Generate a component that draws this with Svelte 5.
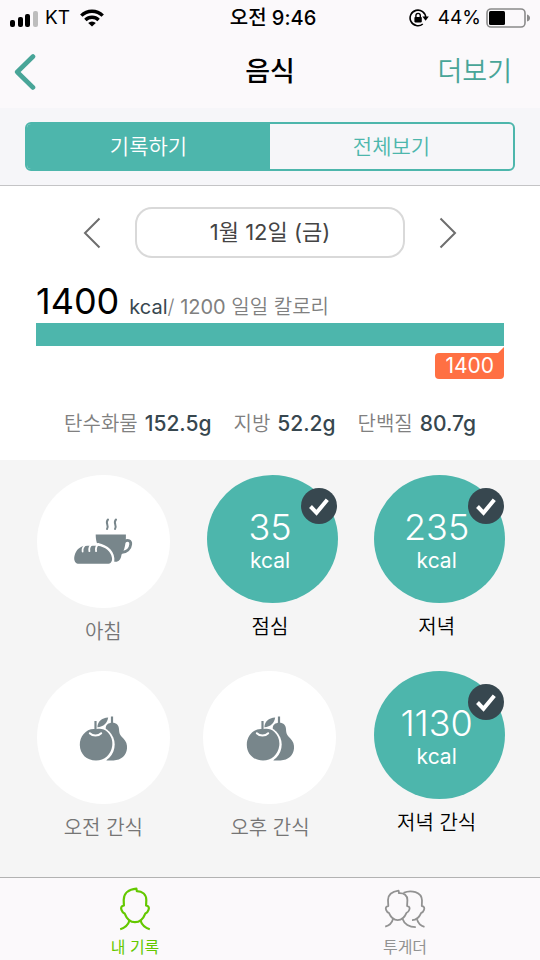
<script lang="ts">
    type Meal = { name: string; kcal?: number; icon?: 'breakfast' | 'fruit' };

    const meals: Meal[] = [
        { name: '아침', icon: 'breakfast' },
        { name: '점심', kcal: 35 },
        { name: '저녁', kcal: 235 },
        { name: '오전 간식', icon: 'fruit' },
        { name: '오후 간식', icon: 'fruit' },
        { name: '저녁 간식', kcal: 1130 },
    ];

    const nutrients = [
        { name: '탄수화물', amount: '152.5g' },
        { name: '지방', amount: '52.2g' },
        { name: '단백질', amount: '80.7g' },
    ];

    const goal = 1200;
    const eaten = 1400;
    const percent = Math.min(100, (eaten / goal) * 100);

    let view = $state('record');
</script>

<div class="app">
    <div class="status">
        <div class="status_side">
            <svg width="28" height="18" viewBox="0 0 28 18">
                <rect x="0" y="11" width="5" height="7" rx="2" />
                <rect x="8" y="8" width="5" height="10" rx="2" />
                <rect x="15" y="5" width="5" height="13" rx="2" />
                <rect x="23" y="2" width="5" height="16" rx="2" fill="#bdbdbd" />
            </svg>
            <span class="carrier">KT</span>
            <svg class="wifi" width="24" height="18" viewBox="0 0 24 18">
                <g fill="none" stroke="#000" stroke-width="3.4">
                    <path d="M1.3 6.6a15.2 15.2 0 0 1 21.4 0" />
                    <path d="M5.4 11a9.4 9.4 0 0 1 13.2 0" />
                </g>
                <path d="M12 17.6l-3.8-3.5a5.4 5.4 0 0 1 7.6 0z" />
            </svg>
        </div>
        <span class="time">오전 9:46</span>
        <div class="status_side end">
            <svg class="lock" width="20" height="18" viewBox="0 0 20 18">
                <path
                    d="M13.8 15a7.8 7.8 0 1 1 2.9-6.4"
                    fill="none"
                    stroke="#000"
                    stroke-width="1.6"
                />
                <path d="M13.4 7.6h6.4l-3.2 4.2z" />
                <rect x="5.4" y="8" width="7.4" height="5.4" rx="0.8" />
                <path d="M6.9 8.4V6.6a2.2 2.2 0 0 1 4.4 0v1.8" fill="none" stroke="#000" stroke-width="1.4" />
            </svg>
            <span>44%</span>
            <svg class="battery" width="44" height="20" viewBox="0 0 44 20">
                <rect x="1" y="1" width="38" height="18" rx="4" fill="none" stroke="#8b8b8b" stroke-width="1.6" />
                <rect x="3" y="3" width="16" height="14" rx="1.5" />
                <path d="M41 6.500q3 1 3 3.500t-3 3.500z" fill="#8b8b8b" />
            </svg>
        </div>
    </div>

    <header>
        <button class="back" aria-label="뒤로">
            <svg width="22" height="38" viewBox="0 0 22 38">
                <path
                    d="M19 3.500L3.200 19 19 34.500"
                    fill="none"
                    stroke="#48a598"
                    stroke-width="4.600"
                    stroke-linecap="round"
                    stroke-linejoin="round"
                />
            </svg>
        </button>
        <h1>음식</h1>
        <button class="more">더보기</button>
    </header>

    <div class="switch">
        <div class="segments">
            <button class:active={view === 'record'} onclick={() => (view = 'record')}>기록하기</button>
            <button class:active={view === 'all'} onclick={() => (view = 'all')}>전체보기</button>
        </div>
    </div>

    <section class="summary">
        <div class="dates">
            <button class="arrow" aria-label="이전 날짜">
                <svg width="18" height="32" viewBox="0 0 18 32">
                    <path d="M16.500 1.500L2 16l14.500 14.500" fill="none" stroke="#6e6e6e" stroke-width="2" />
                </svg>
            </button>
            <button class="date">1월 12일 (금)</button>
            <button class="arrow" aria-label="다음 날짜">
                <svg width="18" height="32" viewBox="0 0 18 32">
                    <path d="M1.500 1.500L16 16 1.500 30.500" fill="none" stroke="#6e6e6e" stroke-width="2" />
                </svg>
            </button>
        </div>

        <p class="total">
            <strong>{eaten}</strong>
            <span class="goal"><span class="unit">kcal</span>/ <span class="limit">{goal}</span> 일일 칼로리</span>
        </p>
        <div class="track">
            <div class="fill" style="width: {percent}%"></div>
        </div>
        <div class="marker">
            <svg width="7" height="7" viewBox="0 0 7 7"><path d="M7 1v6H1z" fill="#ff7043" /></svg>
            <span>{eaten}</span>
        </div>

        <dl>
            {#each nutrients as item}
                <div>
                    <dt>{item.name}</dt>
                    <dd>{item.amount}</dd>
                </div>
            {/each}
        </dl>
    </section>

    <main>
        {#each meals as meal}
            <button class="meal" class:done={meal.kcal}>
                <span class="disk">
                    {#if meal.kcal}
                        <span class="kcal">{meal.kcal}</span>
                        <span class="kcal_unit">kcal</span>
                        <svg class="check" width="36" height="36" viewBox="0 0 36 36">
                            <circle cx="18" cy="18" r="18" fill="#37474f" />
                            <path d="M9.500 18.500l6 6.300L26.300 11.800" fill="none" stroke="#fff" stroke-width="4" />
                        </svg>
                    {:else if meal.icon === 'breakfast'}
                        <svg width="60" height="50" viewBox="0 0 60 50" fill="#78868b">
                            <g fill="none" stroke="#78868b" stroke-linecap="round">
                                <path d="M35 2.500c-3.500 4 1.600 5.200-1 9.500M43 2.500c-3.500 4 1.600 5.200-1 9.500" stroke-width="2" />
                                <path d="M51.500 24.600c3.600-2.400 6.600-.8 6.200 2.800-.4 4.400-4 7.600-8.700 8" stroke-width="2.800" />
                            </g>
                            <path
                                d="M22.700 17.600h30.200c.2 9-1.200 15.200-4.400 20.200-.5 3.600-1.600 6.200-4.700 6.900h-2.500c1.300-9.500-6-17.300-17.400-18.700-.8-2.400-1.200-5.200-1.200-8.400z"
                            />
                            <path
                                d="M5 46.800C1.700 46 .5 42.500 1.600 38.500 3 33 7 29.400 12 28.800h12.500C32.500 29.800 38 34.500 39 41c.4 3.500-1.200 5.800-4.500 5.800z"
                            />
                            <path
                                d="M13.400 27.500c-3 1.400-4.200 4-3.800 7M19.400 27c-2.600 1.700-3.600 4.300-3 7.200M25.600 27c-2.300 1.900-3.100 4.300-2.500 7.200"
                                fill="none"
                                stroke="#fff"
                                stroke-width="1.800"
                                stroke-linecap="round"
                            />
                        </svg>
                    {:else}
                        <svg width="50" height="48" viewBox="0 0 50 48" fill="#78868b">
                            <path
                                d="M28.500 46.500L27.700 14c.2-3.200 2.400-5.300 6.600-5.300 4.400 0 6.500 2.500 6.700 6.300.2 4.800 1 6 4.400 9.600 2.700 2.900 4 6 3.600 10-.7 7-5.600 11.600-13.500 11.900z"
                            />
                            <path d="M34 2.500V10" stroke="#78868b" stroke-width="2.200" />
                            <circle cx="18.200" cy="30.600" r="18.500" fill="#fff" />
                            <path
                                d="M18 15.200c4-1 8.300-.5 11.400 2.800 3.800 3.700 5.600 8.600 4.800 14-1.100 8.500-7.600 14.500-16.200 14.500C8.500 46.500 2 40 1.800 31 1.600 22 8.800 13.600 18 15.200z"
                            />
                            <path d="M11.800 19.300c3 3 8.400 3 11.400 0" fill="none" stroke="#fff" stroke-width="2" stroke-linecap="round" />
                            <path d="M17.500 7v9.500" stroke="#78868b" stroke-width="2.200" />
                            <path d="M19.400 13.200c.2-5.500 4-9.200 10.800-9.700-.9 5.600-4.600 9.400-10.800 9.700z" />
                        </svg>
                    {/if}
                </span>
                <span class="label">{meal.name}</span>
            </button>
        {/each}
    </main>

    <nav>
        <a href="#me" class="active">
            <svg width="34" height="44" viewBox="0 0 34 44" fill="none" stroke="currentColor" stroke-width="2.200" stroke-linejoin="round">
                <path
                    d="M18.800 4.200L18.400 1.700C10.500 2.300 5.800 6.500 5.700 13l.2 5.500c-2.900.6-3.200 2.300-2.400 4.400.6 1.800 1.600 3.200 3.200 3.700 2.100 5.400 5.700 8.600 10.300 8.600s8.200-3.200 10.300-8.600c1.600-.5 2.600-1.900 3.200-3.700.8-2.100.5-3.800-2.400-4.400l.2-5.500C28.200 7.500 24.500 4.200 18.800 4.200z"
                />
                <path d="M11.500 33.500c-1.200 4-4.300 7.200-9.300 8.700M22.500 33.500c1.200 4 4.300 7.200 9.300 8.700" />
            </svg>
            내 기록
        </a>
        <a href="#together">
            <svg width="44" height="44" viewBox="0 -2 44 44" fill="none" stroke="currentColor" stroke-width="1.800" stroke-linejoin="round">
                <path
                    d="M16 4.200L15.600 1.700C9 2.500 5.200 6 5 11l.3 6c-2.500.5-2.900 2-2.200 3.800.6 1.600 1.400 2.700 2.800 3.100 1.900 4.500 4.900 7.200 8.800 7.200s6.900-2.700 8.800-7.200c1.400-.4 2.200-1.500 2.800-3.100.7-1.800.3-3.300-2.200-3.800l.3-6c0-4.500-3.200-7.200-8.600-6.800z"
                />
                <path d="M10 30c-.9 3.600-3.400 6.400-7.800 7.600M19.600 30c1.500 4.800 6.700 8.300 13.200 8.200" />
                <path
                    d="M20.500 3.800c7.500-3.200 18.300-1 18.500 7.700l-.2 5.500c2.500.5 2.900 2 2.200 3.800-.6 1.600-1.400 2.700-2.800 3.100-2 4.700-5 7.300-9.200 7.200"
                />
                <path d="M34 30.200c.9 3.600 3.400 6.400 7.500 7.600" />
            </svg>
            투게더
        </a>
    </nav>
</div>

<style>
    :global(body) {
        margin: 0;
        background: #fff;
    }

    .app {
        display: flex;
        flex-direction: column;
        min-height: 100vh;
        font-family: Inter, 'Noto Sans CJK KR', sans-serif;
        color: #000;
    }

    button {
        margin: 0;
        padding: 0;
        border: 0;
        background: none;
        color: inherit;
        font: inherit;
        cursor: pointer;
    }

    svg {
        display: block;
        flex: none;
    }

    .status {
        display: grid;
        grid-template-columns: 1fr auto 1fr;
        align-items: center;
        height: 36px;
        padding: 0 10px;
        background: #fbf9fb;
        font-size: 19px;
        line-height: 36px;
    }

    .status_side {
        display: flex;
        align-items: center;
    }

    .end {
        justify-content: flex-end;
    }

    .carrier {
        margin: 0 10px 0 7px;
    }

    .time {
        padding-left: 6px;
        font-size: 20px;
        font-weight: 500;
    }

    .lock {
        margin-right: 9px;
    }

    .battery {
        margin-left: 5px;
    }

    header {
        display: grid;
        grid-template-columns: 1fr auto 1fr;
        align-items: center;
        height: 72px;
        padding: 0 28px 0 14px;
        background: #fbf9fb;
    }

    .back {
        justify-self: start;
    }

    h1 {
        margin: 0 0 0 14px;
        font-size: 27px;
        line-height: 40px;
        font-weight: 500;
    }

    .more {
        justify-self: end;
        color: #48a598;
        font-size: 27px;
        line-height: 40px;
        font-weight: 350;
    }

    .switch {
        padding: 14px 25px;
        border-bottom: 1px solid #c4c4c6;
        background: #f6f6f9;
    }

    .segments {
        display: flex;
        overflow: hidden;
        border: 2px solid #4db6ac;
        border-radius: 6px;
    }

    .segments button {
        flex: 1;
        height: 45px;
        color: #4db6ac;
        font-size: 21px;
        line-height: 45px;
        font-weight: 350;
    }

    .segments .active {
        background: #4db6ac;
        color: #fff;
    }

    .summary {
        padding: 21px 36px 20px;
        background: #fff;
    }

    .dates {
        display: flex;
        justify-content: center;
        align-items: center;
        gap: 34px;
    }

    .date {
        flex: 0 1 270px;
        box-sizing: border-box;
        height: 51px;
        border: 2px solid #d9d9d9;
        border-radius: 17px;
        color: #444;
        font-size: 22px;
        line-height: 47px;
    }

    .total {
        display: flex;
        align-items: baseline;
        gap: 10px;
        margin: 22px 0 0;
        line-height: 43px;
    }

    .total strong {
        font-size: 36px;
        font-weight: 400;
    }

    .goal {
        color: #808080;
        font-size: 20px;
        line-height: 28px;
        font-weight: 350;
    }

    .unit {
        color: #37474f;
        font-weight: 400;
    }

    .limit {
        font-weight: 400;
    }

    .track {
        height: 23px;
        background: #e0e0e0;
    }

    .fill {
        height: 100%;
        background: #4db6ac;
    }

    .marker {
        display: flex;
        flex-direction: column;
        align-items: flex-end;
    }

    .marker span {
        padding: 0 10px;
        border-radius: 4px 0 4px 4px;
        background: #ff7043;
        color: #fff;
        font-size: 21px;
        line-height: 26px;
    }

    dl {
        display: flex;
        justify-content: center;
        gap: 22px;
        margin: 29px 0 0;
        font-size: 20px;
        line-height: 32px;
    }

    dl div {
        display: flex;
        gap: 7px;
    }

    dt {
        color: #808080;
        font-weight: 350;
    }

    dd {
        margin: 0;
        color: #37474f;
        font-size: 21px;
        font-weight: 500;
    }

    main {
        display: grid;
        flex: 1;
        grid-template-columns: repeat(3, 1fr);
        align-content: start;
        row-gap: 24px;
        padding: 15px 20px;
        background: #f5f5f5;
    }

    .meal {
        display: flex;
        flex-direction: column;
        align-items: center;
        color: #757575;
    }

    .disk {
        position: relative;
        display: flex;
        flex-direction: column;
        justify-content: center;
        align-items: center;
        width: 133px;
        height: 133px;
        border-radius: 50%;
        background: #fff;
    }

    .done {
        color: #000;
    }

    .done .disk {
        box-sizing: border-box;
        width: 131px;
        height: 128px;
        margin-left: 5px;
        padding: 3px 5px 0 0;
        background: #4db6ac;
        color: #fff;
    }

    .kcal {
        font-size: 36px;
        line-height: 40px;
        font-weight: 300;
    }

    .kcal_unit {
        font-size: 21px;
        line-height: 28px;
    }

    .check {
        position: absolute;
        top: 13px;
        right: 1px;
    }

    .label {
        margin-top: 9px;
        font-size: 20px;
        line-height: 30px;
        font-weight: 350;
    }

    nav {
        display: flex;
        border-top: 1px solid #b2b2b2;
        background: #fbf9fb;
    }

    nav a {
        display: flex;
        flex: 1;
        flex-direction: column;
        align-items: center;
        height: 73px;
        padding-top: 9px;
        color: #929292;
        font-size: 16px;
        line-height: 32px;
        text-decoration: none;
    }

    nav .active {
        color: #64c800;
    }
</style>
